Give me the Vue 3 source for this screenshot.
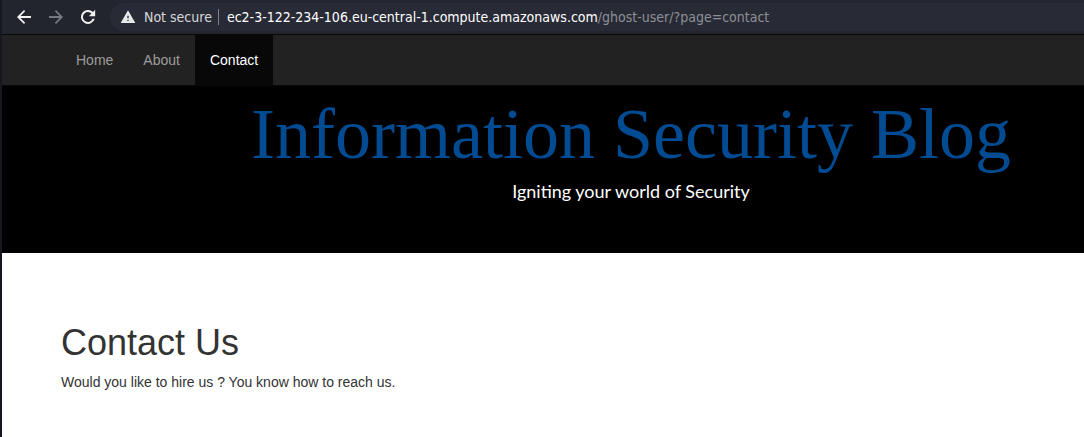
<script setup>
const links = ['Home', 'About', 'Contact']
</script>

<template>
  <div class="window">
    <header class="toolbar">
      <button type="button" class="tool" aria-label="Back">
        <svg viewBox="0 0 24 24"><path d="M20.4 10.8H7.8l5.6-5.6L12 3.6 3.6 12l8.4 8.4 1.4-1.6-5.6-5.6h12.6z" /></svg>
      </button>
      <button type="button" class="tool dim" aria-label="Forward">
        <svg viewBox="0 0 24 24"><path d="M3.6 13.2h12.6l-5.6 5.6 1.4 1.6 8.4-8.4L12 3.6l-1.4 1.6 5.6 5.6H3.6z" /></svg>
      </button>
      <button type="button" class="tool" aria-label="Reload">
        <svg viewBox="0 0 24 24"><path d="M18 6A8.4 8.4 0 1 0 20.1 14.2h-2.6A6 6 0 1 1 16.2 7.8L13 11h7.6V3.4z" /></svg>
      </button>
      <div class="address">
        <svg class="warn" viewBox="0 0 24 24"><path d="M1 21h22L12 2zM13 18h-2v-2h2zm0-4h-2v-4h2z" /></svg>
        <span class="status">Not secure</span>
        <span class="rule"></span>
        <span class="url"><span class="host">ec2-3-122-234-106.eu-central-1.compute.amazonaws.com</span>/ghost-user/?page=contact</span>
      </div>
    </header>
    <nav class="navbar">
      <a v-for="l in links" :key="l" href="#" :class="{ active: l === 'Contact' }">{{ l }}</a>
    </nav>
    <div class="banner">
      <div class="title">Information Security Blog</div>
      <p class="tagline">Igniting your world of Security</p>
    </div>
    <main class="content">
      <h1>Contact Us</h1>
      <p>Would you like to hire us ? You know how to reach us.</p>
    </main>
  </div>
</template>

<style>
body {
  background: #fff;
}
</style>

<style scoped>
.window {
  box-sizing: border-box;
  min-height: 100vh;
  border-left: 2px solid #17181f;
  font-family: "Liberation Sans", Arial, sans-serif;
  font-size: 14px;
  line-height: 20px;
  color: #333;
}
.toolbar {
  display: flex;
  align-items: center;
  height: 34px;
  padding-left: 6px;
  background: #22242e;
  border-bottom: 1px solid #080808;
}
.tool {
  width: 32px;
  height: 32px;
  padding: 6px;
  border: 0;
  background: none;
  color: #f2f2f2;
}
.tool.dim {
  color: #78797f;
}
svg {
  display: block;
  width: 20px;
  height: 20px;
  fill: currentColor;
}
.address {
  flex: 1;
  display: flex;
  align-items: center;
  height: 28px;
  margin-left: 6px;
  padding-left: 10px;
  border-radius: 14px 0 0 14px;
  background: #282a36;
  font-family: "DejaVu Sans Condensed", "Noto Sans", sans-serif;
  white-space: nowrap;
  color: #8e9096;
}
.address .warn {
  width: 16px;
  height: 16px;
  color: #e8e8ea;
}
.status {
  margin-left: 8px;
  color: #d8d8dc;
}
.rule {
  width: 1px;
  height: 16px;
  margin: 0 8px 0 6px;
  background: #80828a;
}
.host {
  color: #fff;
}
.navbar {
  display: flex;
  padding-left: 59px;
  background: #222;
  border-bottom: 1px solid #080808;
}
.navbar a {
  padding: 15px;
  color: #9d9d9d;
  text-decoration: none;
}
.navbar .active {
  background: #080808;
  color: #fff;
}
.banner {
  padding: 8px 0 51px 176px;
  background: #000;
  text-align: center;
}
.title {
  font: 72px/80px "Liberation Serif", serif;
  color: #004b91;
}
p {
  margin: 0;
}
.banner .tagline {
  margin: 6px 0 0;
  font: 18px/22px Lato, sans-serif;
  color: #fff;
}
.content {
  padding: 70px 59px 35px;
}
h1 {
  margin: 0 0 9px;
  font-size: 36px;
  line-height: 40px;
  font-weight: 400;
}
</style>
